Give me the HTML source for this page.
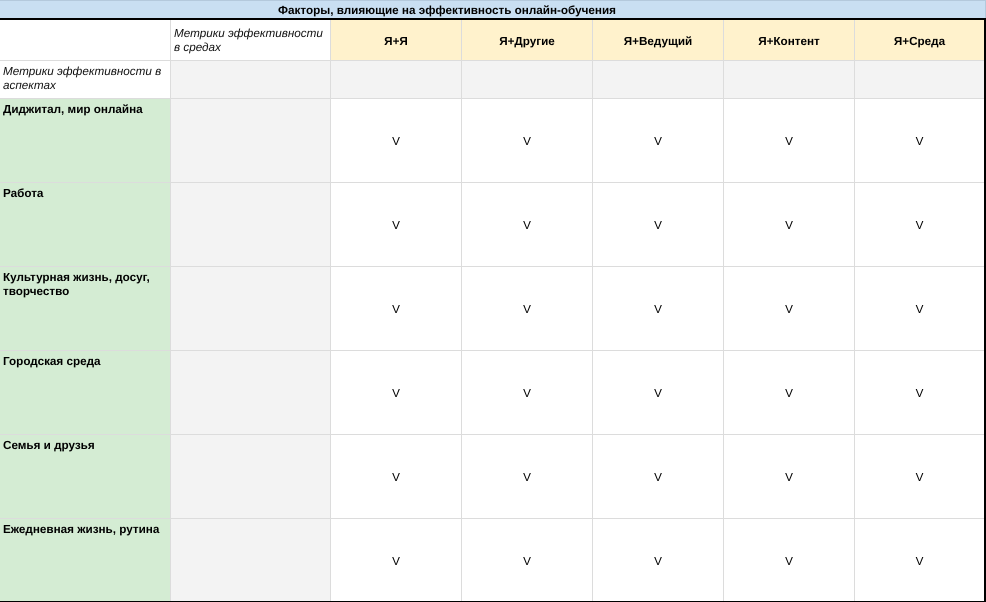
<!DOCTYPE html>
<html lang="ru">
<head>
<meta charset="utf-8">
<style>
html,body{margin:0;padding:0;width:986px;height:602px;overflow:hidden;background:#fff}
body{position:relative;font-family:"Liberation Sans",Arial,sans-serif;font-size:11.7px;line-height:14px;color:#000;text-rendering:geometricPrecision}
.a{position:absolute}
.vl{position:absolute;width:1px;background:#dcdcdc}
.hl{position:absolute;height:1px;background:#dcdcdc}
.t{position:absolute;white-space:nowrap}
.b{font-weight:bold}
.i{font-style:italic;color:#111}
.c{text-align:center}
</style>
</head>
<body>
<div class="a" style="left:0;top:0;width:986px;height:18px;background:#c9dff2"></div>
<div class="a" style="left:0;top:0;width:986px;height:1px;background:#b4c9dc"></div>
<div class="a" style="left:985px;top:0;width:1px;height:18px;background:#b4c9dc"></div>
<div class="t b c" style="left:0;top:4px;width:894px">Факторы, влияющие на эффективность онлайн-обучения</div>

<div class="a" style="left:331px;top:20px;width:653px;height:40px;background:#fff2cc"></div>
<div class="a" style="left:171px;top:61px;width:813px;height:37px;background:#f3f3f3"></div>
<div class="a" style="left:171px;top:99px;width:159px;height:502px;background:#f3f3f3"></div>
<div class="a" style="left:0;top:99px;width:170px;height:502px;background:#d4ecd3"></div>

<div class="vl" style="left:170px;top:20px;height:581px"></div>
<div class="vl" style="left:330px;top:20px;height:581px"></div>
<div class="vl" style="left:461px;top:20px;height:581px"></div>
<div class="vl" style="left:592px;top:20px;height:581px"></div>
<div class="vl" style="left:723px;top:20px;height:581px"></div>
<div class="vl" style="left:854px;top:20px;height:581px"></div>

<div class="hl" style="left:0;top:60px;width:984px"></div>
<div class="hl" style="left:0;top:98px;width:984px"></div>
<div class="hl" style="left:0;top:182px;width:984px"></div>
<div class="hl" style="left:0;top:266px;width:984px"></div>
<div class="hl" style="left:0;top:350px;width:984px"></div>
<div class="hl" style="left:0;top:434px;width:984px"></div>
<div class="hl" style="left:0;top:518px;width:984px"></div>

<div class="a" style="left:0;top:18px;width:986px;height:2px;background:#000"></div>
<div class="a" style="left:984px;top:18px;width:2px;height:584px;background:#000"></div>
<div class="a" style="left:0;top:601px;width:986px;height:1px;background:#000"></div>

<div class="t i" style="left:174px;top:27px">Метрики эффективности<br>в средах</div>
<div class="t i" style="left:3px;top:65px">Метрики эффективности в<br>аспектах</div>

<div class="t b c" style="left:331px;top:35px;width:130px">Я+Я</div>
<div class="t b c" style="left:462px;top:35px;width:130px">Я+Другие</div>
<div class="t b c" style="left:593px;top:35px;width:130px">Я+Ведущий</div>
<div class="t b c" style="left:724px;top:35px;width:130px">Я+Контент</div>
<div class="t b c" style="left:855px;top:35px;width:129px">Я+Среда</div>

<div class="t b" style="left:3px;top:103px">Диджитал, мир онлайна</div>
<div class="t b" style="left:3px;top:187px">Работа</div>
<div class="t b" style="left:3px;top:271px">Культурная жизнь, досуг,<br>творчество</div>
<div class="t b" style="left:3px;top:355px">Городская среда</div>
<div class="t b" style="left:3px;top:439px">Семья и друзья</div>
<div class="t b" style="left:3px;top:523px">Ежедневная жизнь, рутина</div>

<div class="t c" style="left:331px;top:135px;width:130px">V</div><div class="t c" style="left:462px;top:135px;width:130px">V</div><div class="t c" style="left:593px;top:135px;width:130px">V</div><div class="t c" style="left:724px;top:135px;width:130px">V</div><div class="t c" style="left:855px;top:135px;width:129px">V</div>
<div class="t c" style="left:331px;top:219px;width:130px">V</div><div class="t c" style="left:462px;top:219px;width:130px">V</div><div class="t c" style="left:593px;top:219px;width:130px">V</div><div class="t c" style="left:724px;top:219px;width:130px">V</div><div class="t c" style="left:855px;top:219px;width:129px">V</div>
<div class="t c" style="left:331px;top:303px;width:130px">V</div><div class="t c" style="left:462px;top:303px;width:130px">V</div><div class="t c" style="left:593px;top:303px;width:130px">V</div><div class="t c" style="left:724px;top:303px;width:130px">V</div><div class="t c" style="left:855px;top:303px;width:129px">V</div>
<div class="t c" style="left:331px;top:387px;width:130px">V</div><div class="t c" style="left:462px;top:387px;width:130px">V</div><div class="t c" style="left:593px;top:387px;width:130px">V</div><div class="t c" style="left:724px;top:387px;width:130px">V</div><div class="t c" style="left:855px;top:387px;width:129px">V</div>
<div class="t c" style="left:331px;top:471px;width:130px">V</div><div class="t c" style="left:462px;top:471px;width:130px">V</div><div class="t c" style="left:593px;top:471px;width:130px">V</div><div class="t c" style="left:724px;top:471px;width:130px">V</div><div class="t c" style="left:855px;top:471px;width:129px">V</div>
<div class="t c" style="left:331px;top:555px;width:130px">V</div><div class="t c" style="left:462px;top:555px;width:130px">V</div><div class="t c" style="left:593px;top:555px;width:130px">V</div><div class="t c" style="left:724px;top:555px;width:130px">V</div><div class="t c" style="left:855px;top:555px;width:129px">V</div>
</body>
</html>
